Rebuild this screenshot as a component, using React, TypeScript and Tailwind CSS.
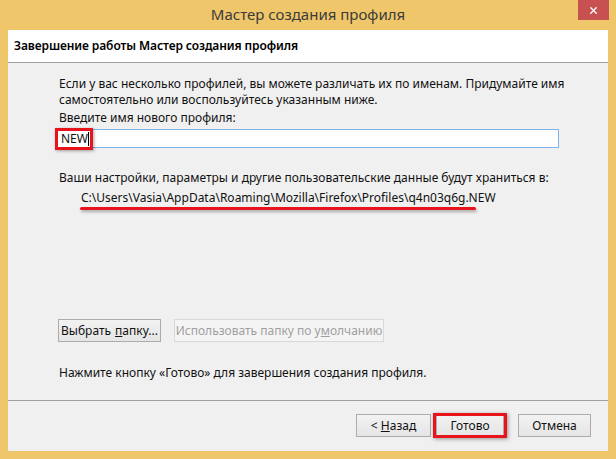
import { X } from 'lucide-react';

const font = { fontFamily: '"Noto Sans", "Open Sans", sans-serif' };

function WinButton({ children, className = '' }: { children: React.ReactNode; className?: string }) {
  return (
    <button
      className={`h-[23px] border border-[#acacac] bg-gradient-to-b from-[#f2f2f2] to-[#e5e5e5] text-[12px] text-[#111] flex items-center justify-center ${className}`}
    >
      {children}
    </button>
  );
}

export default function App() {
  return (
    <div
      className="w-[616px] h-[459px] bg-[#efc76a] flex flex-col px-2 pb-2 overflow-hidden"
      style={font}
    >
      {/* Title bar */}
      <div className="h-[30px] shrink-0 relative flex items-center justify-center">
        <span className="text-[15px] text-[#3b3b3b] -mt-[1px]">Мастер создания профиля</span>
        <div className="absolute right-[-1px] top-0 w-[31px] h-[20px] bg-[#c75050] flex items-center justify-center">
          <X className="w-[11px] h-[11px] text-white" strokeWidth={3} />
        </div>
      </div>

      <div className="flex-1 flex flex-col bg-[#f0f0f0]">
        {/* Header */}
        <div className="h-[33px] shrink-0 bg-white border-b border-[#a0a0a0] flex items-center pl-[6px]">
          <span className="text-[12px] font-semibold text-black tracking-[-0.1px]">
            Завершение работы Мастер создания профиля
          </span>
        </div>

        {/* Body */}
        <div className="flex-1 flex flex-col pl-[47px] pt-[13px] text-[12px] leading-[15px] text-[#111] border-b border-[#a0a0a0]">
          <p className="ml-1 leading-[16px]">
            Если у вас несколько профилей, вы можете различать их по именам. Придумайте имя
            <br />
            самостоятельно или воспользуйтесь указанным ниже.
          </p>
          <p className="ml-1 mt-[2px]">Введите имя нового профиля:</p>
          <div className="relative mt-[4px] w-[504px] h-[19px] bg-white border border-[#7eb4ea] flex items-center pl-[5px]">
            <span>NEW</span>
            <span className="w-px h-[14px] bg-black" />
            <div className="absolute -left-px -top-[2px] w-[38px] h-[22px] border-[3px] border-[#e8141c] shadow-[1px_1px_3px_rgba(0,0,0,0.35)]" />
          </div>
          <p className="ml-1 mt-[22px]">
            Ваши настройки, параметры и другие пользовательские данные будут храниться в:
          </p>
          <p className="ml-[26px] mt-[5px]">C:\Users\Vasia\AppData\Roaming\Mozilla\Firefox\Profiles\q4n03q6g.NEW</p>
          <div className="ml-[25px] mt-[2px] w-[396px] h-[3px] bg-[#e8141c] rounded-full shadow-[1px_2px_3px_rgba(0,0,0,0.3)]" />

          <div className="mt-[109px] ml-[3px] flex gap-[13px]">
            <WinButton className="w-[103px] text-[11.5px]">
              Выбрать <span className="underline ml-1">п</span>апку...
            </WinButton>
            <button className="h-[23px] w-[210px] border border-[#d9d9d9] bg-[#f4f4f4] text-[12px] text-[#a0a0a0] flex items-center justify-center">
              Использовать папку по у<span className="underline">м</span>олчанию
            </button>
          </div>

          <p className="ml-1 mt-[23px]">Нажмите кнопку «Готово» для завершения создания профиля.</p>
        </div>

        {/* Footer */}
        <div className="h-[50px] shrink-0 flex items-start justify-end pt-[13px] pr-[17px]">
          <WinButton className="w-[75px]">
            &lt;&nbsp;<span className="underline">Н</span>азад
          </WinButton>
          <div className="relative ml-[5px]">
            <WinButton className="w-[68px]">Готово</WinButton>
            <div className="absolute -left-[3px] -top-[1px] w-[74px] h-[25px] border-[3px] border-[#e8141c] shadow-[1px_1px_4px_rgba(0,0,0,0.4)]" />
          </div>
          <WinButton className="w-[73px] ml-[14px]">Отмена</WinButton>
        </div>
      </div>
    </div>
  );
}
